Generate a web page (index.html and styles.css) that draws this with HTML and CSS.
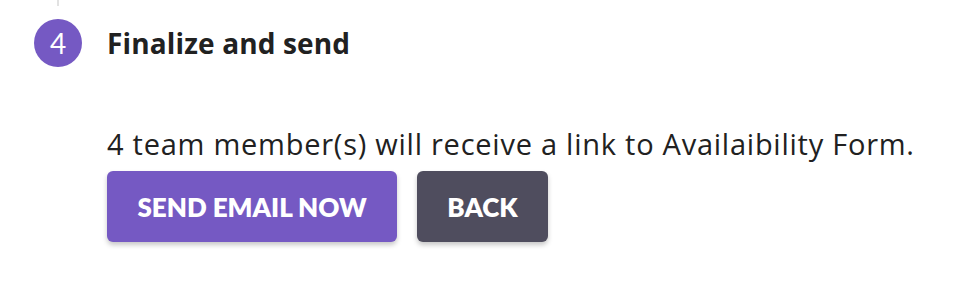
FILE: index.html
```
<!DOCTYPE html>
<html>
<head>
<meta charset="utf-8">
<link rel="stylesheet" href="styles.css">
</head>
<body>
<div class="step">
  <div class="rail">
    <div class="connector"></div>
    <div class="badge">4</div>
  </div>
  <div class="content">
    <h2 class="title">Finalize and send</h2>
    <p class="message">4 team member(s) will receive a link to Availaibility Form.</p>
    <div class="actions">
      <button class="btn btn-primary">SEND EMAIL NOW</button>
      <button class="btn btn-secondary">BACK</button>
    </div>
  </div>
</div>
</body>
</html>
```
FILE: styles.css
```
html, body {
  margin: 0;
  padding: 0;
  background: #ffffff;
}
body {
  font-family: "Open Sans", "Lato", sans-serif;
  color: #212121;
  width: 970px;
  height: 300px;
  overflow: hidden;
}
.step {
  display: flex;
  padding-left: 34px;
}
.rail {
  width: 48px;
  display: flex;
  flex-direction: column;
  align-items: center;
}
.connector {
  width: 2px;
  height: 6px;
  background: #e2e2e2;
  margin-bottom: 13px;
}
.badge {
  width: 48px;
  height: 48px;
  border-radius: 50%;
  background: #7559c3;
  color: #ffffff;
  font-family: "Lato", sans-serif;
  font-size: 28px;
  display: flex;
  align-items: center;
  justify-content: center;
}
.content {
  padding-left: 25px;
  padding-top: 24px;
}
.title {
  margin: 0;
  font-size: 28px;
  font-weight: 700;
  line-height: 38px;
  letter-spacing: 0.15px;
  color: #212121;
}
.message {
  margin: 64px 0 0;
  font-size: 29px;
  line-height: 36px;
  letter-spacing: 0.75px;
  color: #212121;
}
.actions {
  display: flex;
  gap: 20px;
  margin-top: 9px;
}
.btn {
  height: 71px;
  border: none;
  border-radius: 6px;
  color: #ffffff;
  font-family: "Lato", sans-serif;
  font-size: 26px;
  font-weight: 800;
  padding: 0;
  box-shadow: 0 3px 5px rgba(0,0,0,0.22);
  cursor: pointer;
}
.btn-primary {
  background: #7559c3;
  width: 290px;
}
.btn-secondary {
  background: #4f4d5e;
  width: 131px;
}
```
